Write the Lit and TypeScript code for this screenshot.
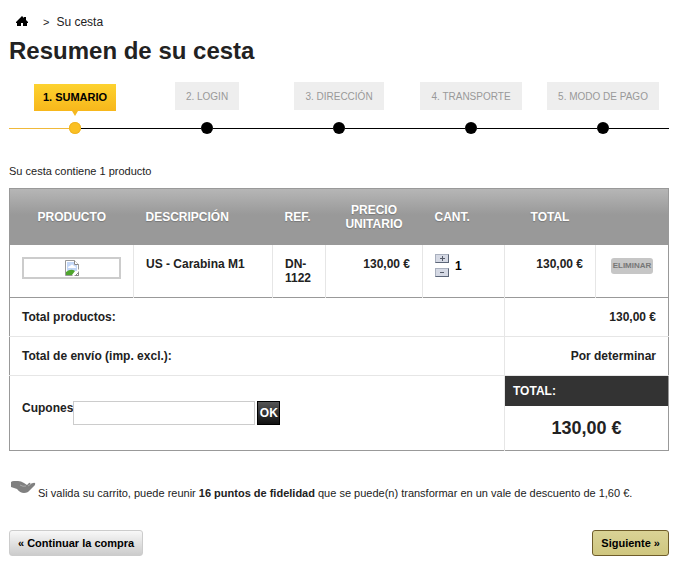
import { LitElement, html, css } from "lit";
import { customElement, property, state } from "lit/decorators.js";
import { classMap } from "lit/directives/class-map.js";

@customElement("order-steps")
class OrderSteps extends LitElement {
  @property({ type: Number }) current = 0;

  static styles = css`
    :host {
      display: block;
    }
    .steps {
      display: grid;
      grid-template-columns: repeat(5, 1fr);
      margin: 0;
      padding: 0;
      list-style: none;
      font-size: 10px;
      line-height: 14px;
      color: #999;
    }
    .step {
      display: flex;
      flex-direction: column;
      align-items: center;
    }
    .tab {
      display: flex;
      flex-direction: column;
      align-items: center;
      height: 40px;
      white-space: nowrap;
    }
    .label {
      padding: 8px 11px 6px;
      background: #eee;
    }
    .rail {
      display: flex;
      align-items: center;
      align-self: stretch;
    }
    .line {
      flex: 1;
      height: 1px;
      background: #000;
    }
    .dot {
      width: 12px;
      height: 12px;
      border-radius: 50%;
      background: #000;
    }
    .current .tab {
      height: 38px;
      padding-top: 2px;
    }
    .current .label {
      padding: 6px 9px 7px;
      background: linear-gradient(#fdd22f, #f7b71b);
      color: #000;
      font-size: 11px;
      font-weight: bold;
    }
    .current .tab::after {
      content: "";
      border: 3px solid transparent;
      border-top: 5px solid #f5b921;
      border-bottom: 0;
    }
    .current .dot {
      background: #fbc023;
      box-shadow: inset 0 0 0 1px #f0b423;
    }
    .current .line:first-child {
      background: #f0b93a;
    }
  `;

  render() {
    const names = ["Sumario", "Login", "Dirección", "Transporte", "Modo de pago"];
    return html`<ol class="steps">
      ${names.map(
        (name, i) => html`<li class=${classMap({ step: true, current: i === this.current })}>
          <div class="tab"><span class="label">${i + 1}. ${name.toUpperCase()}</span></div>
          <div class="rail">
            <span class="line"></span><span class="dot"></span><span class="line"></span>
          </div>
        </li>`
      )}
    </ol>`;
  }
}

@customElement("app-root")
class AppRoot extends LitElement {
  @state() private quantity = 1;

  static styles = css`
    :host {
      display: block;
      padding: 14px 7px 20px 9px;
      background: #fff;
      color: #222;
      font: 11px/14px "Liberation Sans", Arial, sans-serif;
    }
    .crumbs {
      display: flex;
      align-items: center;
      height: 16px;
      padding-left: 7px;
      font-size: 12px;
    }
    .home {
      display: flex;
      margin-right: 15px;
      color: #000;
    }
    .arrow {
      margin-right: 7px;
      font-size: 11px;
    }
    h1 {
      margin: 6px 0 16px;
      font-size: 24px;
      line-height: 30px;
    }
    .summary {
      margin: 30px 0 10px;
    }
    table {
      width: 100%;
      table-layout: fixed;
      border-collapse: collapse;
      border: 1px solid #999;
      font-size: 12px;
      font-weight: bold;
    }
    .c-image {
      width: 124px;
    }
    .c-ref {
      width: 53px;
    }
    .c-price {
      width: 97px;
    }
    .c-qty {
      width: 82px;
    }
    .c-total {
      width: 91px;
    }
    .c-delete {
      width: 73px;
    }
    th,
    td {
      padding: 12px;
      text-align: left;
      vertical-align: top;
    }
    thead {
      background: linear-gradient(#b6b6b6, #999 45%);
      color: #fff;
      text-shadow: 0 1px 1px #777;
    }
    thead th {
      height: 32px;
      vertical-align: middle;
    }
    .item {
      border-bottom: 1px solid #999;
    }
    .item td {
      height: 28px;
      border-right: 1px solid #e6e6e6;
    }
    .item td:last-child {
      border-right-color: #999;
    }
    thead .center,
    .item .center {
      text-align: center;
    }
    .item .right,
    .sum .right {
      text-align: right;
    }
    .photo {
      display: flex;
      justify-content: center;
      border: 2px solid #ccc;
      padding: 1px;
    }
    .quantity {
      display: flex;
      align-items: center;
      gap: 6px;
      color: #000;
      margin-top: -3px;
    }
    .spin {
      display: flex;
      flex-direction: column;
      gap: 5px;
    }
    .spin button {
      display: flex;
      width: 14px;
      height: 9px;
      padding: 0;
      border: 1px solid #a9b0be;
      border-right-color: #5c6678;
      border-bottom-color: #5c6678;
      background: #d5d9e4;
    }
    .delete {
      padding: 0 2px;
      border: 0;
      border-radius: 3px;
      background: #c6c6c6;
      color: #777;
      font: bold 8px/16px "Liberation Sans", Arial, sans-serif;
    }
    .item .remove {
      padding: 12px 0;
      text-align: center;
    }
    .sum {
      border-bottom: 1px solid #e6e6e6;
    }
    .sum th,
    .sum td {
      height: 14px;
    }
    .sum th,
    .voucher {
      border-right: 1px solid #e6e6e6;
    }
    .voucher form {
      display: flex;
      margin-top: 13px;
    }
    .voucher input {
      box-sizing: border-box;
      width: 182px;
      height: 24px;
      margin-right: 2px;
      border: 1px solid #ccc;
      padding: 0 4px;
      font: inherit;
    }
    .ok {
      width: 23px;
      height: 24px;
      border: 1px solid #000;
      padding: 0;
      background: linear-gradient(#555, #111);
      color: #fff;
      font: inherit;
    }
    .grand {
      padding: 0;
    }
    .grand-label {
      padding: 8px;
      background: #333;
      color: #fff;
    }
    .grand-value {
      font-size: 18px;
      line-height: 44px;
      text-align: center;
    }
    .loyalty {
      display: flex;
      gap: 2px;
      margin: 30px 0;
      padding-left: 2px;
    }
    .loyalty p {
      margin: 5px 0 0;
    }
    .nav {
      display: flex;
      justify-content: space-between;
    }
    .nav a,
    .nav button {
      border: 1px solid #ccc;
      border-radius: 3px;
      padding: 5px 8px;
      background: linear-gradient(#f8f8f8, #ccc);
      color: #000;
      font: bold 11px/14px "Liberation Sans", Arial, sans-serif;
      text-decoration: none;
    }
    .nav button {
      border-color: #6e5c2a;
      background: linear-gradient(#dad396, #cfc67f);
    }
  `;

  render() {
    return html`
      <nav class="crumbs" aria-label="Ruta">
        <a class="home" href="#" aria-label="Inicio">
          <svg width="12" height="12" viewBox="0 0 12 12" fill="currentColor">
            <path d="M6 0 L8 2 V1 H10 V4 L12 6 V7 H11 V10 H7 V7 H5 V10 H1 V7 H0 V6 Z" />
          </svg>
        </a>
        <span class="arrow">&gt;</span><span>Su cesta</span>
      </nav>
      <h1>Resumen de su cesta</h1>
      <order-steps .current=${0}></order-steps>
      <p class="summary">Su cesta contiene 1 producto</p>
      <table>
        <colgroup>
          <col class="c-image" />
          <col />
          <col class="c-ref" />
          <col class="c-price" />
          <col class="c-qty" />
          <col class="c-total" />
          <col class="c-delete" />
        </colgroup>
        <thead>
          <tr>
            <th class="center">PRODUCTO</th>
            <th>DESCRIPCIÓN</th>
            <th>REF.</th>
            <th class="center">PRECIO UNITARIO</th>
            <th>CANT.</th>
            <th class="center">TOTAL</th>
            <th></th>
          </tr>
        </thead>
        <tbody>
          <tr class="item">
            <td>
              <div class="photo">
                <svg width="14" height="16" viewBox="0 0 14 16" role="img" aria-label="US - Carabina M1">
                  <path d="M0.5 0.5 H9.5 L13.5 4.5 V15.5 H0.5 Z" fill="#fff" stroke="#999" />
                  <path d="M2 2 H9 V5 H12 V11 H2 Z" fill="#c3d7f7" />
                  <path d="M3 8 Q3 6 5 6 Q7 3 9 6 Q11 6 11 8 Z" fill="#fff" />
                  <path d="M1 15 V12 Q6 8 10 11 L7 15 Z" fill="#4fa52e" />
                  <path d="M9.5 0.5 V4.5 H13.5" fill="#fff" stroke="#888" />
                  <path d="M14 9 L7 16 H9 L14 11 Z" fill="#fff" />
                  <path d="M10.5 15.5 L13.5 12.5 V15.5 Z" fill="#fff" stroke="#888" />
                </svg>
              </div>
            </td>
            <td>US - Carabina M1</td>
            <td>DN-1122</td>
            <td class="right">130,00 €</td>
            <td>
              <div class="quantity">
                <span class="spin">
                  <button type="button" aria-label="Añadir" @click=${() => this.quantity++}>
                    <svg width="12" height="7" viewBox="0 0 12 7" stroke="#555b69">
                      <path d="M4 3.5 H9 M6.5 1 V6" />
                    </svg>
                  </button>
                  <button
                    type="button"
                    aria-label="Quitar"
                    @click=${() => (this.quantity = Math.max(1, this.quantity - 1))}
                  >
                    <svg width="12" height="7" viewBox="0 0 12 7" stroke="#555b69">
                      <path d="M4 3.5 H8" />
                    </svg>
                  </button>
                </span>
                <span>${this.quantity}</span>
              </div>
            </td>
            <td class="right">130,00 €</td>
            <td class="remove"><button type="button" class="delete">ELIMINAR</button></td>
          </tr>
          <tr class="sum">
            <th colspan="5">Total productos:</th>
            <td colspan="2" class="right">130,00 €</td>
          </tr>
          <tr class="sum">
            <th colspan="5">Total de envío (imp. excl.):</th>
            <td colspan="2" class="right">Por determinar</td>
          </tr>
          <tr>
            <td colspan="5" class="voucher">
              <form @submit=${(e: Event) => e.preventDefault()}>
                <label for="voucher">Cupones</label>
                <input id="voucher" type="text" />
                <button class="ok">OK</button>
              </form>
            </td>
            <td colspan="2" class="grand">
              <div class="grand-label">TOTAL:</div>
              <div class="grand-value">130,00 €</div>
            </td>
          </tr>
        </tbody>
      </table>
      <div class="loyalty">
        <svg width="25" height="13" viewBox="0 0 25 13" aria-hidden="true">
          <path
            d="M0 1 Q1 0 3 0 H7 Q10 0 13 2 L16 4 L18 2 Q20 1 19 3 L22 2 Q25 1 24 4 L19 9 Q17 12 13 12 Q9 12 6 8 L0 6 Z"
            fill="#808080"
          />
          <path d="M9 4 Q12 6 15 5 M17 5 L20 3" fill="none" stroke="#aaa" />
        </svg>
        <p>
          Si valida su carrito, puede reunir <b>16 puntos de fidelidad</b> que se puede(n) transformar en un
          vale de descuento de 1,60 €.
        </p>
      </div>
      <div class="nav">
        <a href="#">« Continuar la compra</a>
        <button type="button">Siguiente »</button>
      </div>
    `;
  }
}
